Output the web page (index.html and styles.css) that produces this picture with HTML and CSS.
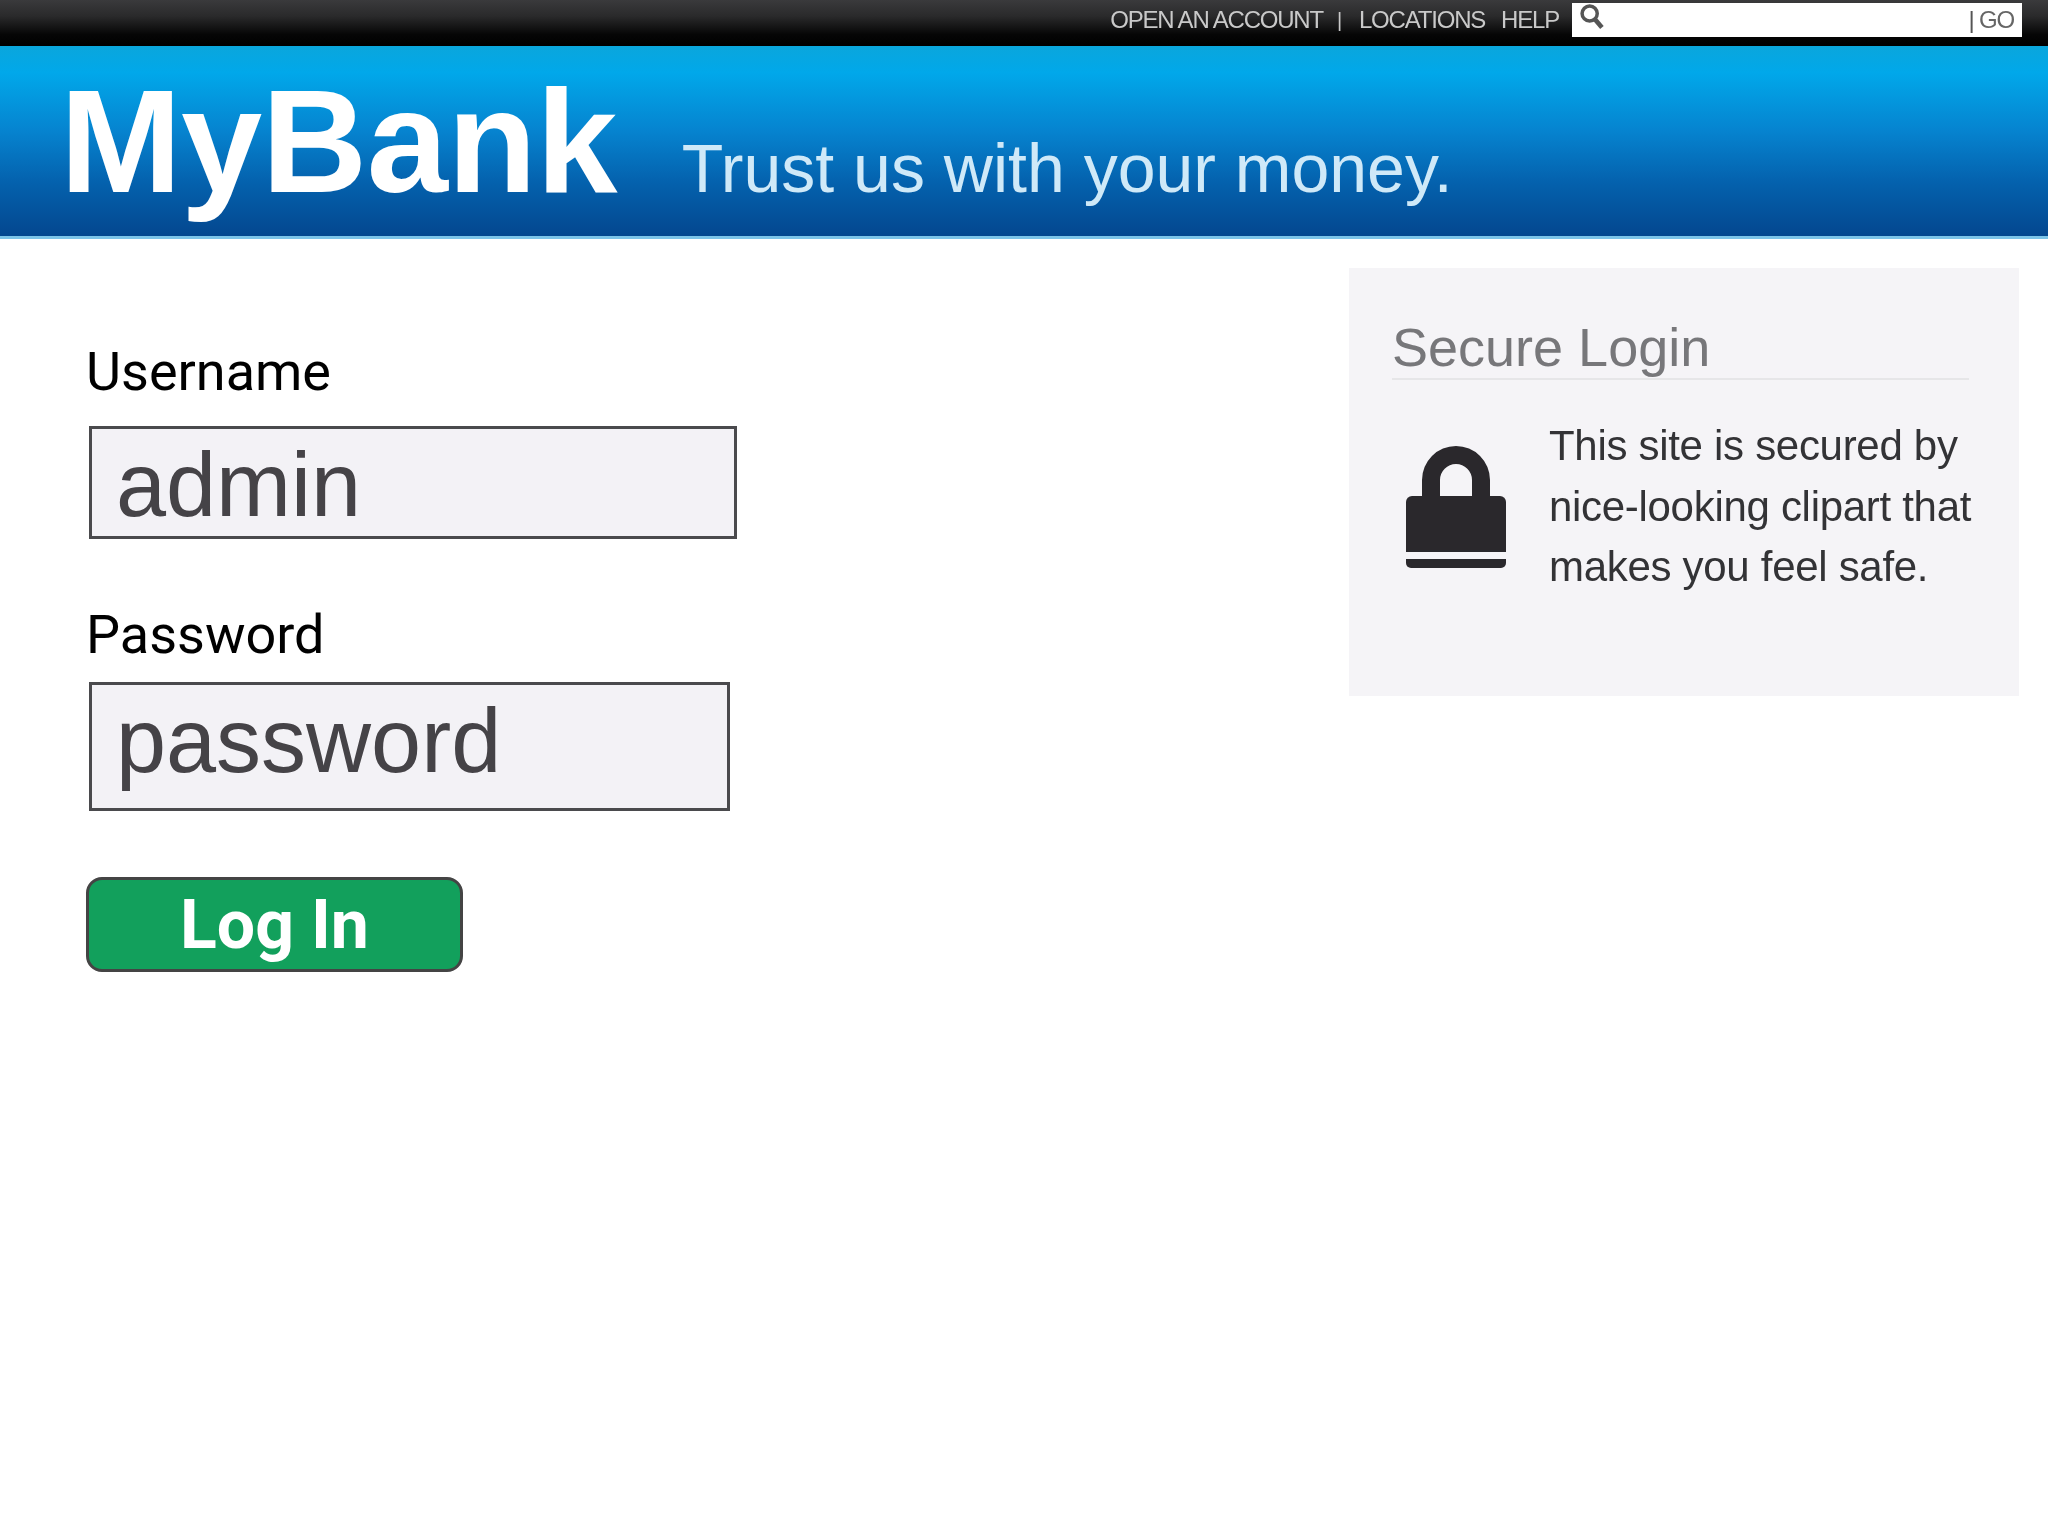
FILE: index.html
```html
<!DOCTYPE html>
<html lang="en">
<head>
<meta charset="utf-8">
<title>MyBank</title>
<link rel="stylesheet" href="styles.css">
</head>
<body>
<nav class="topbar">
  <a class="toplink">OPEN AN ACCOUNT</a>
  <span class="sep">|</span>
  <a class="toplink loc">LOCATIONS</a>
  <a class="toplink help">HELP</a>
  <div class="search">
    <svg class="search-icon" viewBox="0 0 24 24"><circle cx="10" cy="9" r="6.5" fill="none" stroke="#555" stroke-width="3"/><path d="M14.5 14l6 7" stroke="#555" stroke-width="4" fill="none"/></svg>
    <span class="go"><span class="go-sep">|</span> GO</span>
  </div>
</nav>
<header class="banner">
  <h1 class="logo">MyBank</h1>
  <p class="tagline">Trust us with your money.</p>
</header>
<main class="content">
  <form class="login">
    <label class="label">Username</label>
    <div class="field field-user">admin</div>
    <label class="label label-pass">Password</label>
    <div class="field field-pass">password</div>
    <button class="submit" type="button">Log In</button>
  </form>
  <aside class="panel">
    <h2 class="panel-title">Secure Login</h2>
    <div class="panel-body">
      <svg class="lock" viewBox="0 0 100 130"><path d="M16 58V40a34 34 0 0 1 68 0V58H66V40a16 16 0 0 0-32 0V58Z" fill="#2a282c"/><path d="M0 62a6 6 0 0 1 6-6H94a6 6 0 0 1 6 6V112H0Z" fill="#2a282c"/><path d="M0 119H100V123a5 5 0 0 1-5 5H5a5 5 0 0 1-5-5Z" fill="#2a282c"/></svg>
      <p class="panel-text">This site is secured by<br>nice-looking clipart that<br>makes you feel safe.</p>
    </div>
  </aside>
</main>
</body>
</html>
```
FILE: styles.css
```css
* { box-sizing: border-box; }
html, body { margin: 0; padding: 0; background: #fff; }
body { width: 2048px; height: 1536px; overflow: hidden; font-family: "Liberation Sans", Arial, sans-serif; }

.topbar {
  height: 46px;
  display: flex;
  align-items: center;
  justify-content: flex-end;
  padding: 0 26px 6px 0;
  background: linear-gradient(#3a3a3c 0%, #2a2a2b 35%, #060606 75%, #000 100%);
  color: #c9c9c9;
  font-size: 24px;
  letter-spacing: -1.2px;
}
.toplink, .sep { filter: blur(0.5px); }
.sep { margin: 0 18px 0 14px; font-size: 20px; }
.help { margin-left: 16px; }
.search {
  width: 450px;
  height: 34px;
  margin-left: 13px;
  background: #fff;
  display: flex;
  align-items: center;
  justify-content: space-between;
  padding: 0 8px 0 6px;
  color: #666;
  filter: blur(0.5px);
}
.search-icon { width: 28px; height: 28px; margin-top: -6px; }
.go-sep { font-size: 24px; color: #555; }

.banner {
  height: 193px;
  display: flex;
  align-items: baseline;
  padding: 0 0 0 60px;
  background: linear-gradient(#0aa6dc 0%, #01a8ea 14%, #0683cf 45%, #0461ad 72%, #04478f 100%);
  border-bottom: 3px solid #7cc4e8;
  color: #fff;
}
.logo {
  margin: 0;
  font-size: 146px;
  line-height: 192px;
  font-weight: 700;
  letter-spacing: -0.5px;
}
.tagline {
  margin: 0 0 0 65px;
  font-size: 68px;
  color: #cfe9f8;
}

.content {
  display: flex;
  justify-content: space-between;
  align-items: flex-start;
  padding: 29px 29px 0 86px;
}
.login {
  display: flex;
  flex-direction: column;
  align-items: flex-start;
  padding-top: 72px;
}
.label {
  font-family: Roboto, sans-serif;
  font-size: 54px;
  line-height: 64px;
  color: #000;
}
.label-pass { margin-top: 64px; }
.field {
  margin: 22px 0 0 3px;
  height: 113px;
  padding-left: 24px;
  background: #f3f2f6;
  border: 3px solid #4a4a4d;
  font-size: 90px;
  line-height: 113px;
  color: #454347;
}
.field-user { width: 648px; }
.field-pass { width: 641px; height: 129px; margin-top: 15px; line-height: 113px; }
.submit {
  margin-top: 66px;
  width: 377px;
  height: 95px;
  background: #12a05c;
  border: 3px solid #444;
  border-radius: 16px;
  color: #fff;
  font-family: Roboto, sans-serif;
  font-weight: 700;
  font-size: 68px;
  line-height: 80px;
  padding: 0;
}

.panel {
  width: 670px;
  height: 428px;
  padding: 48px 50px 0 43px;
  background: #f5f4f7;
}
.panel-title {
  margin: 0;
  font-size: 54px;
  line-height: 62px;
  font-weight: 400;
  color: #77777a;
  border-bottom: 2px solid #e6e6e8;
  filter: blur(0.5px);
}
.panel-body {
  display: flex;
  align-items: flex-start;
  margin-top: 36px;
}
.lock { width: 100px; height: 130px; margin: 24px 0 0 14px; flex: none; }
.panel-text {
  margin: 0 0 0 43px;
  font-size: 42px;
  line-height: 60.6px;
  color: #333336;
  white-space: nowrap;
  letter-spacing: -0.3px;
  filter: blur(0.5px);
}
```
